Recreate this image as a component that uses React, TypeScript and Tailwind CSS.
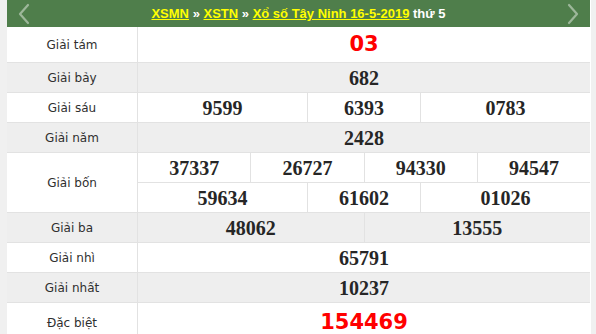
import { ReactNode } from "react";

type Cell = { value: string; span: string };

const labelFont = { fontFamily: '"DejaVu Sans", Tahoma, sans-serif' };

function Chevron({ dir }: { dir: "left" | "right" }) {
  return (
    <svg width="14" height="22" viewBox="0 0 14 22" fill="none">
      <polyline
        points={dir === "left" ? "11,2 3,11 11,20" : "3,2 11,11 3,20"}
        stroke="#9db79a"
        strokeWidth="2.2"
        strokeLinecap="round"
        strokeLinejoin="round"
      />
    </svg>
  );
}

function Label({ children, gray, rows }: { children: ReactNode; gray?: boolean; rows?: boolean }) {
  return (
    <div
      className={`flex items-center justify-center text-[12px] text-[#2f2f2f] ${gray ? "bg-[#eeeeee]" : "bg-white"} ${rows ? "row-span-2" : ""}`}
      style={labelFont}
    >
      {children}
    </div>
  );
}

function Num({ cell, gray }: { cell: Cell; gray?: boolean }) {
  return (
    <div
      className={`${cell.span} flex items-center justify-center font-['Liberation_Serif',serif] text-[20px] font-bold text-[#262626] ${gray ? "bg-[#eeeeee]" : "bg-white"}`}
    >
      {cell.value}
    </div>
  );
}

export default function App() {
  return (
    <div className="h-[334px] w-[596px] overflow-hidden bg-[#f0f0f0] pl-[7px] pr-[5px]">
      <div className="h-full bg-white pr-px">
        {/* Header */}
        <div className="flex h-[27px] items-center justify-between bg-[#4f7e4b] px-[10px] font-['Liberation_Sans',Arial,sans-serif] text-[13px] font-bold">
          <Chevron dir="left" />
          <div className="text-white">
            <span className="text-[#ffff00] underline">XSMN</span> »{" "}
            <span className="text-[#ffff00] underline">XSTN</span> »{" "}
            <span className="text-[#ffff00] underline">Xổ số Tây Ninh 16-5-2019</span> thứ 5
          </div>
          <Chevron dir="right" />
        </div>

        {/* Results table */}
        <div className="grid grid-cols-[130px_repeat(8,1fr)] grid-rows-[35px_repeat(8,29px)_40px] gap-px bg-[#e2e2e2]">
          <Label>Giải tám</Label>
          <div
            className="col-span-8 flex items-center justify-center bg-white text-[21px] font-bold text-[#ff0000]"
            style={labelFont}
          >
            03
          </div>

          <Label gray>Giải bảy</Label>
          <Num gray cell={{ value: "682", span: "col-span-8" }} />

          <Label>Giải sáu</Label>
          <Num cell={{ value: "9599", span: "col-span-3" }} />
          <Num cell={{ value: "6393", span: "col-span-2" }} />
          <Num cell={{ value: "0783", span: "col-span-3" }} />

          <Label gray>Giải năm</Label>
          <Num gray cell={{ value: "2428", span: "col-span-8" }} />

          <Label rows>Giải bốn</Label>
          <Num cell={{ value: "37337", span: "col-span-2" }} />
          <Num cell={{ value: "26727", span: "col-span-2" }} />
          <Num cell={{ value: "94330", span: "col-span-2" }} />
          <Num cell={{ value: "94547", span: "col-span-2" }} />
          <Num cell={{ value: "59634", span: "col-span-3" }} />
          <Num cell={{ value: "61602", span: "col-span-2" }} />
          <Num cell={{ value: "01026", span: "col-span-3" }} />

          <Label gray>Giải ba</Label>
          <Num gray cell={{ value: "48062", span: "col-span-4" }} />
          <Num gray cell={{ value: "13555", span: "col-span-4" }} />

          <Label>Giải nhì</Label>
          <Num cell={{ value: "65791", span: "col-span-8" }} />

          <Label gray>Giải nhất</Label>
          <Num gray cell={{ value: "10237", span: "col-span-8" }} />

          <Label>Đặc biệt</Label>
          <div
            className="col-span-8 flex items-center justify-center bg-white text-[21px] font-bold text-[#ff0000]"
            style={labelFont}
          >
            154469
          </div>
        </div>
      </div>
    </div>
  );
}
